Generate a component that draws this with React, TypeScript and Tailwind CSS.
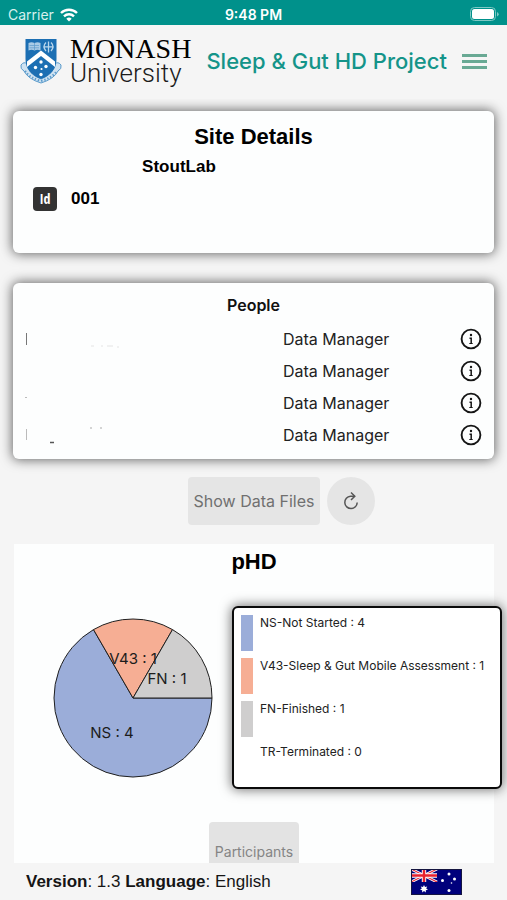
import clsx from 'clsx';

const SLICES = [
  { code: 'NS', label: 'Not Started', count: 4, fill: '#9badd9', swatch: 'bg-[#9badd9]' },
  { code: 'V43', label: 'Sleep & Gut Mobile Assessment', count: 1, fill: '#f6ae94', swatch: 'bg-[#f6ae94]' },
  { code: 'FN', label: 'Finished', count: 1, fill: '#cfcece', swatch: 'bg-[#cfcece]' },
  { code: 'TR', label: 'Terminated', count: 0, fill: '#ffffff', swatch: 'bg-white' },
];

const PEOPLE = [
  { id: 1, role: 'Data Manager' },
  { id: 2, role: 'Data Manager' },
  { id: 3, role: 'Data Manager' },
  { id: 4, role: 'Data Manager' },
];

const CARD = 'rounded-md bg-[#fdfefe] shadow-[0_0_12px_1px_#666]';
const HELV = "font-['Liberation_Sans',sans-serif]";

function StatusBar() {
  return (
    <div className="grid h-[25px] shrink-0 grid-cols-3 items-center bg-[#00918b] px-2 pt-1 text-sm leading-5 text-white">
      <div className="flex items-center gap-[6px]">
        <span className="text-[#d6f0ee]">Carrier</span>
        <svg width="18" height="14" viewBox="0 0 18 14" fill="none" stroke="white" strokeWidth="2.4">
          <path d="M1 5 A11.5 11.5 0 0 1 17 5" />
          <path d="M4 8.3 A7.2 7.2 0 0 1 14 8.3" />
          <path d="M9 13.6 L6.3 10.8 A3.8 3.8 0 0 1 11.7 10.8 Z" fill="white" stroke="none" />
        </svg>
      </div>
      <span className="text-center font-semibold">9:48 PM</span>
      <svg className="justify-self-end" width="30" height="15" viewBox="0 0 30 15">
        <rect x="1.5" y=".5" width="25" height="13" rx="4" fill="none" stroke="#7fc8c4" />
        <rect x="3" y="2" width="22" height="10" rx="2.5" fill="white" />
        <path d="M28 5 v4.5 q1.700-.8 1.700-2.200 t-1.700-2.300z" fill="#7fc8c4" />
      </svg>
    </div>
  );
}

function Crest() {
  return (
    <svg width="42" height="46" viewBox="0 0 42 46">
      <path d="M1 27 q3-4 6-1 q1 10 14 15 q13-5 14-15 q3-3 6 1 q1 4-3 6 q-4 8-17 12 q-13-4-17-12 q-4-2-3-6z" fill="#cfe2f1" stroke="#5b9bcb" strokeWidth="1" />
      <path d="M5 33 Q10 40 21 43 Q32 40 37 33" fill="none" stroke="#5b9bcb" strokeWidth="2.2" strokeDasharray="1.4 1.8" />
      <path d="M5.500 1 h31 v20 q0 14-15.500 20 q-15.500-6-15.500-20z" fill="#1c6fb3" />
      <path d="M7 23.500 L21 12.500 L35 23.500 v5.500 L21 18 L7 29z" fill="white" />
      <path d="M8.500 5 q3-1.500 6 0 q3-1.500 6 0 v7.500 q-3-1.500-6 0 q-3-1.500-6 0z" fill="#a9cbe6" />
      <path d="M14.500 5 v7.500 M9.500 7.500 h9.500 M9.500 9.800 h9.500" stroke="#5b9bcb" strokeWidth=".7" />
      <path d="M28.500 3.500 v11 M26 4.500 q-4 4 0 8.500 M31 4.500 q4 4 0 8.500 M24.500 8.800 h8" fill="none" stroke="#b9d6ec" strokeWidth="1.300" />
      <g fill="white">
        <circle cx="21" cy="24" r="1.700" />
        <circle cx="15.500" cy="29.500" r="1.700" />
        <circle cx="26" cy="28.500" r="1.700" />
        <circle cx="21.500" cy="31" r="1.100" />
        <circle cx="21" cy="36.500" r="1.700" />
      </g>
    </svg>
  );
}

function Header() {
  return (
    <header className="flex h-[74px] shrink-0 items-center justify-between px-5 pb-[2px]">
      <div className="flex items-center gap-2">
        <Crest />
        <div className="flex flex-col text-[#1c1c1c]">
          <span className="font-['Liberation_Serif',serif] text-[28px] leading-6 text-black">MONASH</span>
          <span className="font-['Roboto',sans-serif] text-[26px] leading-6 font-light">University</span>
        </div>
      </div>
      <h1 className="text-[22px] font-medium whitespace-nowrap text-[#149489]">Sleep &amp; Gut HD Project</h1>
      <button type="button" aria-label="Open menu" className="flex w-[25px] flex-col gap-[3px]">
        <span className="h-[3px] bg-[#69a994]" />
        <span className="h-[3px] bg-[#69a994]" />
        <span className="h-[3px] bg-[#69a994]" />
      </button>
    </header>
  );
}

function SiteDetails() {
  return (
    <section className={clsx(CARD, HELV, 'h-[142px] shrink-0 pt-3 font-bold text-black')}>
      <h2 className="text-center text-[22px] leading-7">Site Details</h2>
      <p className="w-[69%] pt-1 text-center text-[17px] leading-6">StoutLab</p>
      <div className="flex items-center gap-[14px] px-5 pt-2">
        <span className="flex size-6 items-center justify-center rounded bg-[#333] font-['Liberation_Sans_Narrow','Open_Sans_Condensed','Liberation_Sans',sans-serif] text-sm text-white">
          Id
        </span>
        <span className="text-[17px] leading-6">001</span>
      </div>
    </section>
  );
}

// What is left of the name column once the names are blanked out
function HiddenName({ id }: { id: number }) {
  return (
    <svg width="120" height="20" viewBox="0 0 120 20">
      {id === 1 && (
        <>
          <path d="M1.500 4 v12" stroke="#777" />
          <path d="M66 17 h3 M76 17 h2 M82 17 h6 M92 18 h2" stroke="#e4e4e4" />
        </>
      )}
      {id === 3 && <path d="M0 4.500 h2" stroke="#bbb" />}
      {id === 4 && (
        <>
          <path d="M1.500 4 v11" stroke="#bbb" />
          <path d="M25 17.500 h4" stroke="#555" strokeWidth="1.500" />
          <path d="M65 3 h2 M75 3 h2" stroke="#aaa" />
        </>
      )}
    </svg>
  );
}

function InfoIcon() {
  return (
    <svg width="22" height="22" viewBox="0 0 22 22" fill="none" stroke="#151515">
      <circle cx="11" cy="11" r="9.400" strokeWidth="1.900" />
      <circle cx="11" cy="7" r="1.200" fill="#151515" stroke="none" />
      <path d="M9.500 10.200 h1.700 v5.600" strokeWidth="1.500" />
      <path d="M9.300 15.500 h3.400" strokeWidth="1" />
    </svg>
  );
}

function People() {
  return (
    <section className={clsx(CARD, 'mt-[30px] h-[176px] shrink-0 px-3 pt-3')}>
      <h2 className="text-center text-base leading-5 font-semibold text-[#111]">People</h2>
      <ul className="pt-2">
        {PEOPLE.map((person) => (
          <li key={person.id} className="flex h-8 items-center">
            <div className="w-[258px]">
              <HiddenName id={person.id} />
            </div>
            <span className="flex-1 text-base text-[#222]">{person.role}</span>
            <button type="button" aria-label="Show person details">
              <InfoIcon />
            </button>
          </li>
        ))}
      </ul>
    </section>
  );
}

function Actions() {
  return (
    <div className="flex shrink-0 items-center justify-center gap-[7px] pt-[18px] pl-14">
      <button type="button" className="h-12 rounded bg-[#e5e5e5] px-[6px] text-base text-[#707070]">
        Show Data Files
      </button>
      <button type="button" aria-label="Refresh" className="flex size-12 items-center justify-center rounded-full bg-[#e5e5e5]">
        <svg width="18" height="20" viewBox="0 0 18 20" fill="none" stroke="#555" strokeWidth="1.500">
          <path d="M12.500 5.200 H8.500 A6.200 6.200 0 1 0 15.200 11.500" />
          <path d="M9 1.500 L12.800 5.200 L9 9" />
        </svg>
      </button>
    </div>
  );
}

function PieChart() {
  return (
    <svg className="shrink-0" width="162" height="162" viewBox="0 0 162 162" role="img" aria-label="Participants by status">
      <g stroke="#1f1f1f" strokeWidth="1" strokeLinejoin="round">
        <path d="M81 81 H160 A79 79 0 1 1 41.500 12.600 Z" fill={SLICES[0].fill} />
        <path d="M81 81 L41.500 12.600 A79 79 0 0 1 120.500 12.600 Z" fill={SLICES[1].fill} />
        <path d="M81 81 L120.500 12.600 A79 79 0 0 1 160 81 Z" fill={SLICES[2].fill} />
      </g>
      <g fill="#1c1c1c" fontSize="15" textAnchor="middle">
        <text x="60" y="121">NS : 4</text>
        <text x="81" y="47">V43 : 1</text>
        <text x="115" y="67">FN : 1</text>
      </g>
    </svg>
  );
}

function Legend() {
  return (
    <ul className="-mr-2 flex h-[183px] w-[270px] shrink-0 flex-col gap-[7px] rounded-md border-2 border-[#0a0a0a] bg-white px-[7px] pt-[7px] shadow-[0_0_12px_1px_#777]">
      {SLICES.map((slice) => (
        <li key={slice.code} className="flex h-9 gap-[7px]">
          <span className={clsx('w-3 shrink-0', slice.swatch)} />
          <span className="text-xs leading-4 whitespace-nowrap text-[#222]">
            {slice.code}-{slice.label} : {slice.count}
          </span>
        </li>
      ))}
    </ul>
  );
}

function StudyPanel() {
  return (
    <section className="mt-[19px] ml-px flex min-h-0 flex-1 flex-col bg-[#fdfefe] pt-1">
      <h2 className={clsx(HELV, 'text-center text-[22px] leading-7 font-bold text-black')}>pHD</h2>
      <div className="flex items-center justify-between pt-[30px] pl-[38px]">
        <PieChart />
        <Legend />
      </div>
      <button type="button" className="mt-[33px] h-[60px] shrink-0 self-center rounded bg-[#e3e3e3] px-[6px] text-sm text-[#858585]">
        Participants
      </button>
    </section>
  );
}

function Flag() {
  return (
    <svg width="51" height="26" viewBox="0 0 51 26" role="img" aria-label="Australia">
      <rect width="51" height="26" fill="#00007c" />
      <path d="M0 0 L26 13 M26 0 L0 13" stroke="white" strokeWidth="2.800" />
      <path d="M0 0 L26 13 M26 0 L0 13" stroke="#e8212e" strokeWidth="1.100" />
      <path d="M13 0 V13 M0 6.500 H26" stroke="white" strokeWidth="4.400" />
      <path d="M13 0 V13 M0 6.500 H26" stroke="#e8212e" strokeWidth="2.500" />
      <rect y="13" width="51" height="13" fill="#00007c" />
      <g fill="white">
        <path d="M13 16 l1 2 2.200-.5 -1 2 1.800 1.300 -2.200.5 v2.200 l-1.800-1.400 -1.800 1.400 v-2.200 l-2.200-.5 1.800-1.300 -1-2 2.200.5z" />
        <circle cx="38" cy="5" r="1.500" />
        <circle cx="31.500" cy="11.500" r="1.500" />
        <circle cx="43.500" cy="10" r="1.500" />
        <circle cx="38" cy="21.500" r="1.500" />
        <circle cx="40.500" cy="14" r=".8" />
      </g>
      <rect x=".5" y=".5" width="50" height="25" fill="none" stroke="#151540" />
    </svg>
  );
}

function Footer() {
  return (
    <footer className={clsx(HELV, 'flex h-[37px] shrink-0 items-center justify-between bg-[#f5f5f5] pr-[45px] pl-[26px] text-[17px] text-[#151515]')}>
      <p>
        <b>Version</b>: 1.3 <b>Language</b>: English
      </p>
      <Flag />
    </footer>
  );
}

export default function App() {
  return (
    <div className="flex h-screen flex-col overflow-hidden bg-[#f5f5f5] font-['Inter',sans-serif]">
      <StatusBar />
      <Header />
      <main className="flex min-h-0 flex-1 flex-col overflow-hidden px-[13px] pt-3">
        <SiteDetails />
        <People />
        <Actions />
        <StudyPanel />
      </main>
      <Footer />
    </div>
  );
}
